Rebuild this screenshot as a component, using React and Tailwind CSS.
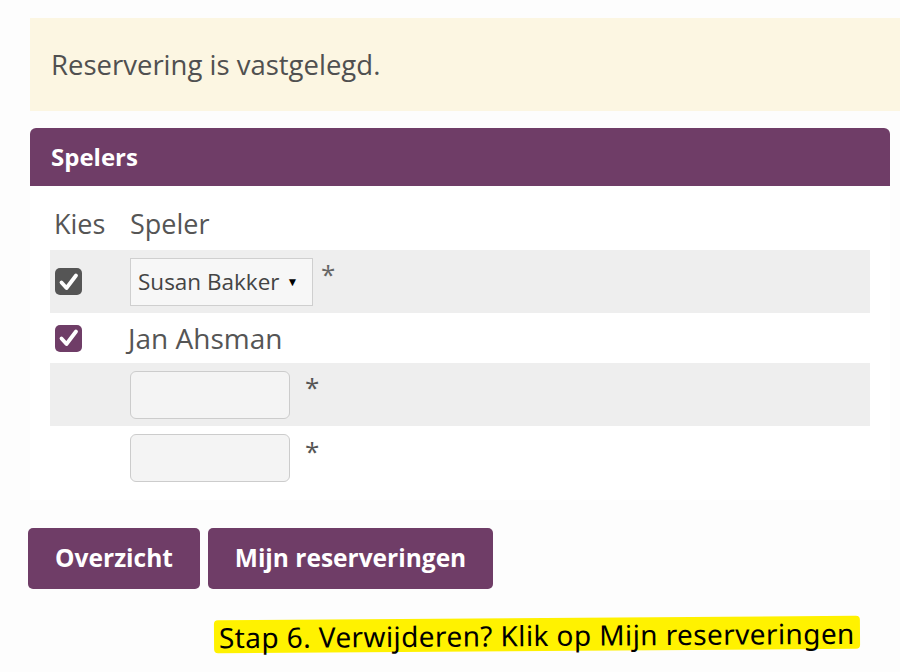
import { useState } from 'react';

function Check({ checked, color }) {
    return (
        <span className={`flex items-center justify-center w-[27px] h-[27px] rounded-[5px] ${color}`}>
            {checked && (
                <svg width="22" height="22" viewBox="0 0 22 22" fill="none">
                    <path d="M3.5 11.5 L8.5 17 L18 4.5" stroke="white" strokeWidth="3.8" strokeLinecap="round" strokeLinejoin="round" />
                </svg>
            )}
        </span>
    );
}

export default function App() {
    const [speler] = useState("Susan Bakker");

    return (
        <div className="w-[900px] h-[672px] bg-[#fdfdfd] text-[#555] overflow-hidden" style={{ fontFamily: '"Open Sans", sans-serif' }}>
            <div className="pl-[30px] pt-[18px]">
                {/* melding */}
                <div className="h-[93px] bg-[#fcf6e2] flex items-center pl-[21px] text-[27.5px] text-[#505050]">
                    Reservering is vastgelegd.
                </div>

                {/* Spelers paneel */}
                <div className="mt-[17px] w-[860px] bg-white">
                    <div className="h-[58px] bg-[#6f3d67] rounded-t-[6px] flex items-center pl-[21px] text-white font-bold text-[24px]">
                        Spelers
                    </div>
                    <div className="px-[20px] pb-[10px]">
                        <div className="flex items-end h-[64px] pb-[6px] text-[27px] text-[#555]">
                            <span className="w-[80px] pl-[4px]">Kies</span>
                            <span>Speler</span>
                        </div>

                        <div className="flex items-center h-[63px] bg-[#eeeeee]">
                            <div className="w-[80px] pl-[5px]">
                                <Check checked color="bg-[#555555]" />
                            </div>
                            <div className="flex items-center h-[48px] w-[183px] border border-[#cfcfcf] bg-[#f7f7f7] pl-[7px] text-[22.5px] text-[#444]">
                                {speler}
                                <span className="ml-[7px] text-[12px] text-black">▼</span>
                            </div>
                            <span className="ml-[8px] text-[26px] text-[#666] -mt-[14px]">*</span>
                        </div>

                        <div className="flex items-center h-[50px]">
                            <div className="w-[80px] pl-[5px]">
                                <Check checked color="bg-[#6f3d67]" />
                            </div>
                            <span className="text-[28px] text-[#555] -ml-[2px]">Jan Ahsman</span>
                        </div>

                        <div className="flex items-center h-[63px] bg-[#eeeeee]">
                            <div className="w-[80px]" />
                            <div className="h-[48px] w-[160px] rounded-[6px] border border-[#cccccc] bg-[#f4f4f4]" />
                            <span className="ml-[15px] text-[26px] text-[#555] -mt-[14px]">*</span>
                        </div>

                        <div className="flex items-center h-[64px]">
                            <div className="w-[80px]" />
                            <div className="h-[48px] w-[160px] rounded-[6px] border border-[#cccccc] bg-[#f4f4f4]" />
                            <span className="ml-[15px] text-[26px] text-[#555] -mt-[14px]">*</span>
                        </div>
                    </div>
                </div>
            </div>

            {/* knoppen */}
            <div className="flex gap-[8px] pl-[28px] mt-[28px]">
                <button className="h-[61px] w-[172px] rounded-[5px] bg-[#6f3d67] text-white font-bold text-[24.5px]">
                    Overzicht
                </button>
                <button className="h-[61px] w-[285px] rounded-[5px] bg-[#6f3d67] text-white font-bold text-[24.5px]">
                    Mijn reserveringen
                </button>
            </div>

            <div className="pl-[214px] mt-[29px]">
                <span className="inline-block bg-[#fff200] px-[5px] pt-[1px] rounded-[4px] -rotate-[0.4deg] text-black text-[28px] leading-[32px] tracking-[0.4px]" style={{ fontFamily: '"Noto Sans", sans-serif' }}>
                    Stap 6. Verwijderen? Klik op Mijn reserveringen
                </span>
            </div>
        </div>
    );
}
